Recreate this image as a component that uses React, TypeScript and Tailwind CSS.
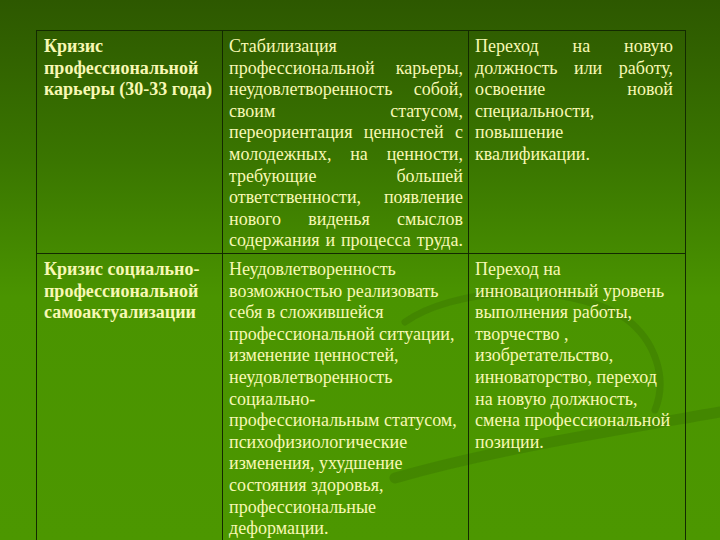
import React from "react";

const J = ({ children }: { children: React.ReactNode }) => (
  <div className="text-justify [text-align-last:justify]">{children}</div>
);
const L = ({ children }: { children: React.ReactNode }) => <div className="text-left">{children}</div>;

const cell =
  "font-['Liberation_Serif','Times_New_Roman',serif] text-[18px] leading-[21.6px] text-[#f8f8b4] border-[#132a00] pt-[5px] whitespace-nowrap";

export default function App() {
  return (
    <div className="relative w-[720px] h-[540px] overflow-hidden bg-[linear-gradient(to_bottom,#2d5800_0%,#3a7600_30%,#4a9400_55%,#4c9700_100%)]">
      <svg className="absolute left-0 top-0 pointer-events-none" width="720" height="540" viewBox="0 0 720 540">
        <path d="M405 322 C 450 290, 560 278, 625 318 C 655 340, 668 378, 655 410" fill="none" stroke="#1e4000" strokeOpacity="0.16" strokeWidth="7" strokeLinecap="round" />
        <path d="M395 478 C 500 448, 620 430, 720 412" fill="none" stroke="#1e4000" strokeOpacity="0.16" strokeWidth="11" strokeLinecap="round" />
      </svg>
      <div className="relative pt-[30px] pl-[36px]">
        <div className="grid grid-cols-[186px_246px_217px] grid-rows-[223px_320px] w-[650px] border-l border-t border-[#132a00]">
          <div className={`${cell} border-r border-b pl-[7px] font-bold`}>
            <L>Кризис</L>
            <L>профессиональной</L>
            <L>карьеры (30-33 года)</L>
          </div>
          <div className={`${cell} border-r border-b pl-[6px] pr-[5px]`}>
            <L>Стабилизация</L>
            <J>профессиональной карьеры,</J>
            <J>неудовлетворенность собой,</J>
            <J>своим статусом,</J>
            <J>переориентация ценностей с</J>
            <J>молодежных, на ценности,</J>
            <J>требующие большей</J>
            <J>ответственности, появление</J>
            <J>нового виденья смыслов</J>
            <J>содержания и процесса труда.</J>
          </div>
          <div className={`${cell} border-r border-b pl-[6px] pr-[12px]`}>
            <J>Переход на новую</J>
            <J>должность или работу,</J>
            <J>освоение новой</J>
            <L>специальности,</L>
            <L>повышение</L>
            <L>квалификации.</L>
          </div>
          <div className={`${cell} border-r pl-[7px] font-bold`}>
            <L>Кризис социально-</L>
            <L>профессиональной</L>
            <L>самоактуализации</L>
          </div>
          <div className={`${cell} border-r pl-[6px]`}>
            <L>Неудовлетворенность</L>
            <L>возможностью реализовать</L>
            <L>себя в сложившейся</L>
            <L>профессиональной ситуации,</L>
            <L>изменение ценностей,</L>
            <L>неудовлетворенность</L>
            <L>социально-</L>
            <L>профессиональным статусом,</L>
            <L>психофизиологические</L>
            <L>изменения, ухудшение</L>
            <L>состояния здоровья,</L>
            <L>профессиональные</L>
            <L>деформации.</L>
          </div>
          <div className={`${cell} border-r pl-[6px]`}>
            <L>Переход на</L>
            <L>инновационный уровень</L>
            <L>выполнения работы,</L>
            <L>творчество ,</L>
            <L>изобретательство,</L>
            <L>инноваторство, переход</L>
            <L>на новую должность,</L>
            <L>смена профессиональной</L>
            <L>позиции.</L>
          </div>
        </div>
      </div>
    </div>
  );
}
